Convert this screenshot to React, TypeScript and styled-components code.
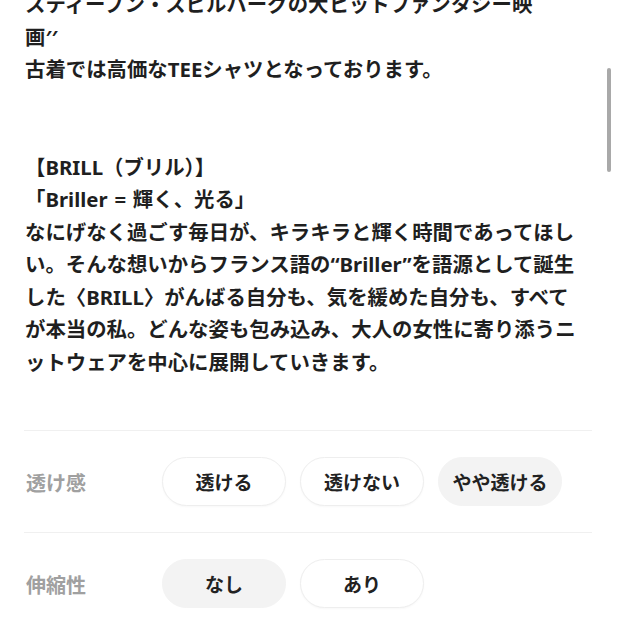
import React from 'react';
import styled, { createGlobalStyle } from 'styled-components';

const GlobalStyle = createGlobalStyle`
	html, body {
		margin: 0;
		padding: 0;
		background: #ffffff;
		overflow: hidden;
	}
	body {
		font-family: "Noto Sans", "Noto Sans CJK JP", sans-serif;
		color: #222222;
		-webkit-font-smoothing: antialiased;
	}
`;

const Page = styled.div`
	position: relative;
	width: 617px;
	height: 617px;
	overflow: hidden;
	padding: 0 25px 0 24px;
	box-sizing: border-box;
`;

const Description = styled.p`
	margin: -12px 0 0 1px;
	font-size: 20.4px;
	font-weight: 700;
	line-height: 32.5px;
	white-space: pre;
	color: #1f1f1f;
`;

const Specs = styled.div`
	margin-top: 52px;
	display: flex;
	flex-direction: column;
`;

const Row = styled.div`
	display: grid;
	grid-template-columns: 138px 1fr;
	align-items: center;
	padding: 26px 0;
	border-top: 1px solid #f0f0f0;
`;

const Label = styled.div`
	padding: 5px 0 0 2px;
	font-size: 20px;
	font-weight: 700;
	color: #a0a0a0;
	line-height: 1;
`;

const Options = styled.div`
	display: flex;
	gap: 14px;
`;

const Pill = styled.div<{ $active?: boolean }>`
	width: 124px;
	height: 49px;
	box-sizing: border-box;
	border-radius: 25px;
	display: flex;
	align-items: center;
	justify-content: center;
	font-size: 19px;
	font-weight: 700;
	color: #222222;
	background: ${(p) => (p.$active ? '#f3f3f3' : '#ffffff')};
	border: 1px solid ${(p) => (p.$active ? '#f3f3f3' : '#eeeeee')};
	box-shadow: ${(p) => (p.$active ? 'none' : '0 1px 2px rgba(0, 0, 0, 0.03)')};
`;

// iOS style scroll indicator on top of the content
const ScrollIndicator = styled.div`
	position: absolute;
	top: 68px;
	right: 6px;
	width: 4px;
	height: 104px;
	border-radius: 2px;
	background: #a9a9a9;
`;

const description = [
	'スティーブン・スピルバーグの大ヒットファンタジー映',
	'画′′',
	'古着では高価なTEEシャツとなっております。',
	'',
	'',
	'【BRILL（ブリル）】',
	'「Briller\u2004=\u2004輝く、光る」',
	'なにげなく過ごす毎日が、キラキラと輝く時間であってほし',
	'い。そんな想いからフランス語の“Briller”を語源として誕生',
	'した〈BRILL〉がんばる自分も、気を緩めた自分も、すべて',
	'が本当の私。どんな姿も包み込み、大人の女性に寄り添うニ',
	'ットウェアを中心に展開していきます。',
].join('\n');

const specs = [
	{ label: '透け感', options: ['透ける', '透けない', 'やや透ける'], selected: 'やや透ける' },
	{ label: '伸縮性', options: ['なし', 'あり'], selected: 'なし' },
];

const SpecRow = ({ label, options, selected }: { label: string; options: string[]; selected: string }) => (
	<Row>
		<Label>{label}</Label>
		<Options>
			{options.map((opt) => (
				<Pill key={opt} $active={opt === selected}>
					{opt}
				</Pill>
			))}
		</Options>
	</Row>
);

export default function App() {
	return (
		<>
			<GlobalStyle />
			<Page>
				<Description>{description}</Description>
				<Specs>
					{specs.map((s) => (
						<SpecRow key={s.label} {...s} />
					))}
				</Specs>
				<ScrollIndicator />
			</Page>
		</>
	);
}
